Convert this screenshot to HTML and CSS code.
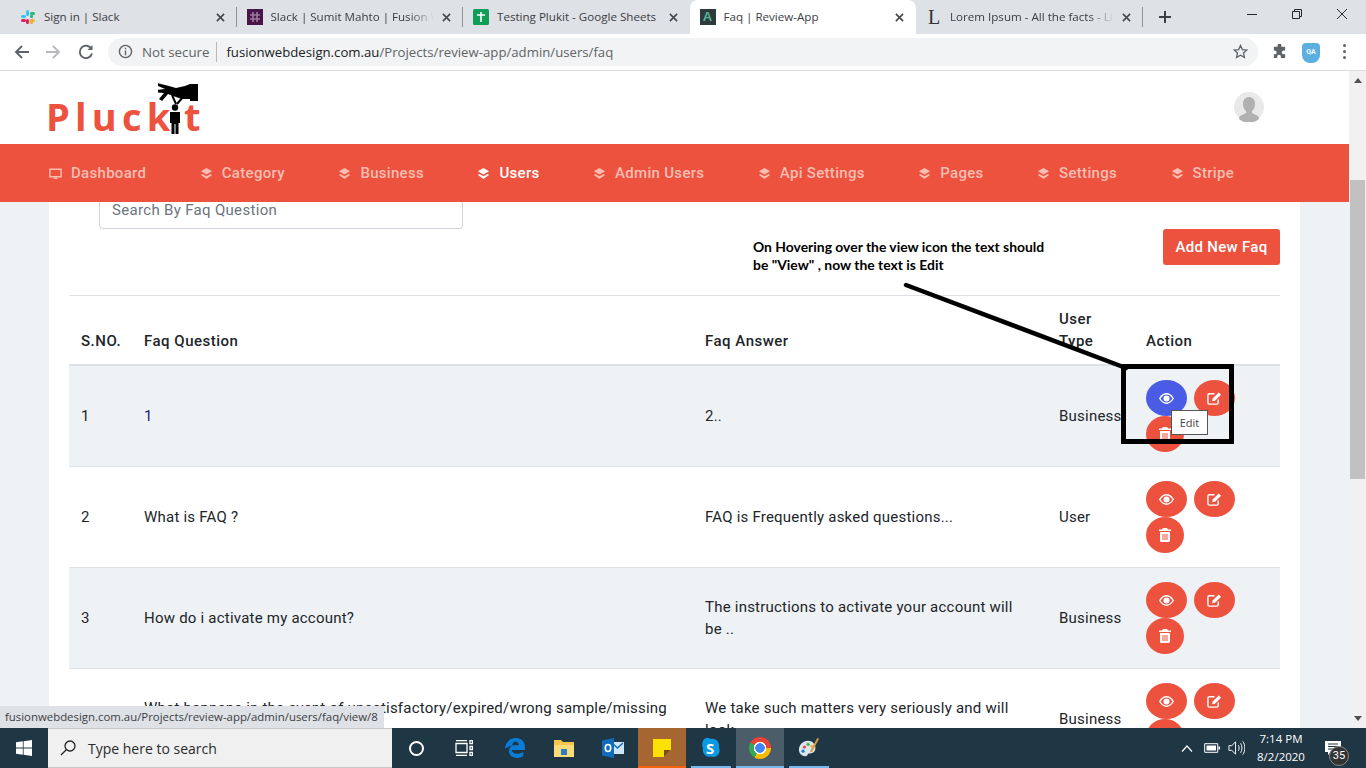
FILE: index.html
```html
<!DOCTYPE html>
<html lang="en">
  <head>
    <meta charset="UTF-8" />
    <title>Faq | Review-App</title>
    <link rel="stylesheet" href="styles.css">
  </head>
  <body>
    <div class="screen">
      <!-- browser tabs -->
      <div class="tabstrip">
        <div class="tab">
          <svg class="favicon" viewBox="0 0 16 16">
            <rect x="6" y="1" width="3" height="6" rx="1.5" fill="#36c5f0"/><rect x="1" y="6" width="5" height="3" rx="1.5" fill="#36c5f0"/>
            <rect x="10" y="3" width="5" height="3" rx="1.5" fill="#2eb67d"/><rect x="10" y="6" width="3" height="3" rx="1" fill="#2eb67d"/>
            <rect x="1" y="10" width="5" height="3" rx="1.5" fill="#e01e5a"/><rect x="6" y="10" width="3" height="5" rx="1.5" fill="#e01e5a"/>
            <rect x="10" y="10" width="3" height="5" rx="1.5" fill="#ecb22e"/><rect x="10" y="10" width="5" height="3" rx="1.5" fill="#ecb22e"/>
          </svg>
          <span class="tab-title">Sign in | Slack</span>
          <svg class="tab-close" viewBox="0 0 10 10"><path d="M1 1l8 8M9 1l-8 8"/></svg>
        </div>
        <div class="tab">
          <svg class="favicon" viewBox="0 0 16 16">
            <rect width="16" height="16" fill="#4a154b"/>
            <path d="M6 3v10M10 3v10M3 6h10M3 10h10" stroke="#9b7a9c" stroke-width="1.6"/>
          </svg>
          <span class="tab-title fade">Slack | Sumit Mahto | Fusion Web Design</span>
          <svg class="tab-close" viewBox="0 0 10 10"><path d="M1 1l8 8M9 1l-8 8"/></svg>
        </div>
        <div class="tab no-sep">
          <svg class="favicon" viewBox="0 0 16 16">
            <rect width="16" height="16" rx="1.5" fill="#0f9d58"/>
            <path d="M8 3v10M4 6h8" stroke="#fff" stroke-width="1.6"/>
          </svg>
          <span class="tab-title">Testing Plukit - Google Sheets</span>
          <svg class="tab-close" viewBox="0 0 10 10"><path d="M1 1l8 8M9 1l-8 8"/></svg>
        </div>
        <div class="tab tab-active">
          <span class="favicon favicon-a">A</span>
          <span class="tab-title">Faq | Review-App</span>
          <svg class="tab-close" viewBox="0 0 10 10"><path d="M1 1l8 8M9 1l-8 8"/></svg>
        </div>
        <div class="tab">
          <span class="favicon favicon-l">L</span>
          <span class="tab-title fade">Lorem Ipsum - All the facts - Lipsum</span>
          <svg class="tab-close" viewBox="0 0 10 10"><path d="M1 1l8 8M9 1l-8 8"/></svg>
        </div>
        <svg class="new-tab" viewBox="0 0 12 12"><path d="M6 0v12M0 6h12"/></svg>
        <div class="win-controls">
          <svg viewBox="0 0 10 10"><path d="M0 5.5h10"/></svg>
          <svg viewBox="0 0 10 10"><path d="M.5 2.5h7v7h-7zM2.5 2.5v-2h7v7h-2"/></svg>
          <svg viewBox="0 0 10 10"><path d="M0 0l10 10M10 0l-10 10"/></svg>
        </div>
      </div>

      <!-- address bar -->
      <div class="toolbar">
        <svg class="tool-icon" viewBox="0 0 16 16"><path d="M15 8H2M8 2L2 8l6 6"/></svg>
        <svg class="tool-icon tool-off" viewBox="0 0 16 16"><path d="M1 8h13M8 2l6 6-6 6"/></svg>
        <svg class="tool-icon tool-reload" viewBox="0 0 16 16"><path d="M13.5 5A6.2 6.2 0 1 0 14 9.500"/><path class="solid" d="M14.500 1v5h-5z"/></svg>
        <div class="omnibox">
          <svg class="info-icon" viewBox="0 0 16 16"><circle cx="8" cy="8" r="6.500"/><path d="M8 7v5M8 4v1.600"/></svg>
          <span class="not-secure">Not secure</span>
          <span class="url"><b>fusionwebdesign.com.au</b>/Projects/review-app/admin/users/faq</span>
          <svg class="star" viewBox="0 0 16 16"><path d="M8 1.500l2 4.400 4.700.5-3.500 3.200 1 4.700L8 11.900l-4.200 2.400 1-4.700L1.300 6.400 6 5.900z"/></svg>
        </div>
        <svg class="puzzle" viewBox="0 0 16 16"><path d="M6 1.500a2 2 0 0 1 4 0V3h4v4h-1.500a2 2 0 0 0 0 4H14v4H9.500v-1.500a2 2 0 0 0-4 0V15H2v-4h1a2 2 0 0 0 0-4H2V3h4z"/></svg>
        <div class="qa-badge">QA</div>
        <div class="dots"><i></i><i></i><i></i></div>
      </div>

      <div class="viewport">
        <div class="page">
          <header class="site-header">
            <div class="logo">
              <span class="logo-word">Pluck</span>
              <svg class="logo-man" viewBox="0 0 12 30"><circle cx="6" cy="3.500" r="3.200"/><path d="M1 8h10v11H9.500v11H6.500V20h-1v10h-3V19H1z"/></svg>
              <span>t</span>
              <svg class="logo-hand" viewBox="0 0 40 24">
                <path d="M32 1h8v17h-8v-2l-8 0-9-3-5-2-6 7-3-2 5-6-10-1V7l11-1-9-4 1-2 12 3 7 2 9-2z"/>
                <path class="logo-pinch" d="M14 12l4 9M25 14l-6 7"/>
              </svg>
            </div>
            <svg class="avatar" viewBox="0 0 30 30">
              <circle cx="15" cy="15" r="15" fill="#e9e9e9"/>
              <path d="M15 5c4 0 6 3 6 7 0 3-1 5-3 7v2l6 3c1 1 1 3 1 3a15 15 0 0 1-20 0s0-2 1-3l6-3v-2c-2-2-3-4-3-7 0-4 2-7 6-7z" fill="#b1b1b1"/>
            </svg>
          </header>

          <nav class="main-nav">
            <a class="nav-link">
              <svg class="nav-icon" viewBox="0 0 14 14"><path d="M1 2.500h12v8H1z" fill="none" stroke="currentColor" stroke-width="1.600"/><path d="M4.500 13L7 10l2.500 3z"/></svg>Dashboard
            </a>
            <a class="nav-link"><svg class="nav-icon" viewBox="0 0 14 14"><path d="M7 1l6 3.500L7 8 1 4.500zM2.500 7.500L7 10l4.500-2.500L13 8.500 7 13 1 8.500z"/></svg>Category</a>
            <a class="nav-link"><svg class="nav-icon" viewBox="0 0 14 14"><path d="M7 1l6 3.500L7 8 1 4.500zM2.500 7.500L7 10l4.500-2.500L13 8.500 7 13 1 8.500z"/></svg>Business</a>
            <a class="nav-link nav-active"><svg class="nav-icon" viewBox="0 0 14 14"><path d="M7 1l6 3.500L7 8 1 4.500zM2.500 7.500L7 10l4.500-2.500L13 8.500 7 13 1 8.500z"/></svg>Users</a>
            <a class="nav-link"><svg class="nav-icon" viewBox="0 0 14 14"><path d="M7 1l6 3.500L7 8 1 4.500zM2.500 7.500L7 10l4.500-2.500L13 8.500 7 13 1 8.500z"/></svg>Admin Users</a>
            <a class="nav-link"><svg class="nav-icon" viewBox="0 0 14 14"><path d="M7 1l6 3.500L7 8 1 4.500zM2.500 7.500L7 10l4.500-2.500L13 8.500 7 13 1 8.500z"/></svg>Api Settings</a>
            <a class="nav-link"><svg class="nav-icon" viewBox="0 0 14 14"><path d="M7 1l6 3.500L7 8 1 4.500zM2.500 7.500L7 10l4.500-2.500L13 8.500 7 13 1 8.500z"/></svg>Pages</a>
            <a class="nav-link"><svg class="nav-icon" viewBox="0 0 14 14"><path d="M7 1l6 3.500L7 8 1 4.500zM2.500 7.500L7 10l4.500-2.500L13 8.500 7 13 1 8.500z"/></svg>Settings</a>
            <a class="nav-link"><svg class="nav-icon" viewBox="0 0 14 14"><path d="M7 1l6 3.500L7 8 1 4.500zM2.500 7.500L7 10l4.500-2.500L13 8.500 7 13 1 8.500z"/></svg>Stripe</a>
          </nav>

          <main class="content">
            <div class="card">
              <div class="search-box">Search By Faq Question</div>
              <div class="card-actions"><a class="add-btn">Add New Faq</a></div>
              <table class="faq-table">
                <colgroup>
                  <col class="c-no"><col class="c-q"><col class="c-a"><col class="c-type"><col class="c-act">
                </colgroup>
                <thead>
                  <tr><th>S.NO.</th><th>Faq Question</th><th>Faq Answer</th><th>User Type</th><th>Action</th></tr>
                </thead>
                <tbody>
                  <tr>
                    <td>1</td><td class="q-link">1</td><td class="answer">2..</td><td>Business</td>
                    <td>
                      <div class="actions">
                        <a class="round round-wide hover"><svg viewBox="0 0 16 12"><path class="ln" d="M.8 6C3 2.500 5.500 1 8 1s5 1.500 7.200 5C13 9.500 10.500 11 8 11S3 9.500.8 6z"/><circle cx="8" cy="6" r="3.200"/></svg></a>
                        <a class="round round-wide"><svg viewBox="0 0 16 14"><path class="ln" d="M12 8v3.500a1.500 1.500 0 0 1-1.500 1.500h-8A1.500 1.500 0 0 1 1 11.500v-8A1.500 1.500 0 0 1 2.500 2H8"/><path d="M6 7l6.500-6.500 2.500 2.500L8.500 9.500 5.500 10z"/></svg></a>
                        <a class="round"><svg class="trash" viewBox="0 0 12 14"><path d="M4 0h4l1 1.500h3V3H0V1.500h3zM1 4h10v8.500A1.500 1.500 0 0 1 9.500 14h-7A1.500 1.500 0 0 1 1 12.500zM3.500 6v6h1V6zm2 0v6h1V6zm2 0v6h1V6z" fill-rule="evenodd"/></svg></a>
                      </div>
                    </td>
                  </tr>
                  <tr>
                    <td>2</td><td>What is FAQ ?</td><td class="answer">FAQ is Frequently asked questions...</td><td>User</td>
                    <td>
                      <div class="actions">
                        <a class="round round-wide"><svg viewBox="0 0 16 12"><path class="ln" d="M.8 6C3 2.500 5.500 1 8 1s5 1.500 7.200 5C13 9.500 10.500 11 8 11S3 9.500.8 6z"/><circle cx="8" cy="6" r="3.200"/></svg></a>
                        <a class="round round-wide"><svg viewBox="0 0 16 14"><path class="ln" d="M12 8v3.500a1.500 1.500 0 0 1-1.500 1.500h-8A1.500 1.500 0 0 1 1 11.500v-8A1.500 1.500 0 0 1 2.500 2H8"/><path d="M6 7l6.500-6.500 2.500 2.500L8.500 9.500 5.500 10z"/></svg></a>
                        <a class="round"><svg class="trash" viewBox="0 0 12 14"><path d="M4 0h4l1 1.500h3V3H0V1.500h3zM1 4h10v8.500A1.500 1.500 0 0 1 9.500 14h-7A1.500 1.500 0 0 1 1 12.500zM3.500 6v6h1V6zm2 0v6h1V6zm2 0v6h1V6z" fill-rule="evenodd"/></svg></a>
                      </div>
                    </td>
                  </tr>
                  <tr>
                    <td>3</td><td>How do i activate my account?</td><td class="answer">The instructions to activate your account will be ..</td><td>Business</td>
                    <td>
                      <div class="actions">
                        <a class="round round-wide"><svg viewBox="0 0 16 12"><path class="ln" d="M.8 6C3 2.500 5.500 1 8 1s5 1.500 7.200 5C13 9.500 10.500 11 8 11S3 9.500.8 6z"/><circle cx="8" cy="6" r="3.200"/></svg></a>
                        <a class="round round-wide"><svg viewBox="0 0 16 14"><path class="ln" d="M12 8v3.500a1.500 1.500 0 0 1-1.500 1.500h-8A1.500 1.500 0 0 1 1 11.500v-8A1.500 1.500 0 0 1 2.500 2H8"/><path d="M6 7l6.500-6.500 2.500 2.500L8.500 9.500 5.500 10z"/></svg></a>
                        <a class="round"><svg class="trash" viewBox="0 0 12 14"><path d="M4 0h4l1 1.500h3V3H0V1.500h3zM1 4h10v8.500A1.500 1.500 0 0 1 9.500 14h-7A1.500 1.500 0 0 1 1 12.500zM3.500 6v6h1V6zm2 0v6h1V6zm2 0v6h1V6z" fill-rule="evenodd"/></svg></a>
                      </div>
                    </td>
                  </tr>
                  <tr>
                    <td>4</td><td>What happens in the event of unsatisfactory/expired/wrong sample/missing kit..</td><td class="answer">We take such matters very seriously and will look..</td><td>Business</td>
                    <td>
                      <div class="actions">
                        <a class="round round-wide"><svg viewBox="0 0 16 12"><path class="ln" d="M.8 6C3 2.500 5.500 1 8 1s5 1.500 7.200 5C13 9.500 10.500 11 8 11S3 9.500.8 6z"/><circle cx="8" cy="6" r="3.200"/></svg></a>
                        <a class="round round-wide"><svg viewBox="0 0 16 14"><path class="ln" d="M12 8v3.500a1.500 1.500 0 0 1-1.500 1.500h-8A1.500 1.500 0 0 1 1 11.500v-8A1.500 1.500 0 0 1 2.500 2H8"/><path d="M6 7l6.500-6.500 2.500 2.500L8.500 9.500 5.500 10z"/></svg></a>
                        <a class="round"></a>
                      </div>
                    </td>
                  </tr>
                </tbody>
              </table>
            </div>
          </main>
        </div>

        <div class="scrollbar">
          <div class="arrow-up"></div>
          <div class="thumb"></div>
          <div class="arrow-down"></div>
        </div>
      </div>

      <!-- windows taskbar -->
      <div class="taskbar">
        <div class="start">
          <svg viewBox="0 0 16 16"><path d="M0 2.300l6.800-1v6.300H0zM7.600 1.200L16 0v7.600H7.600zM0 8.400h6.800v6.300l-6.800-1zM7.600 8.400H16V16l-8.400-1.200z"/></svg>
        </div>
        <div class="task-search">
          <svg viewBox="0 0 16 16"><circle cx="10" cy="6" r="5"/><path d="M6.500 9.500L1 15"/></svg>
          <span>Type here to search</span>
        </div>
        <div class="task-slot"><i class="cortana"></i></div>
        <div class="task-slot">
          <svg class="w18" viewBox="0 0 18 16" fill="none" stroke="#fff" stroke-width="1.300"><path d="M1 3.500h11v9H1zM1 .7h11M1 15.300h11M15 .7h2.500v3H15zM15 6.500h2.500v3H15zM15 12.300h2.500v3H15z"/></svg>
        </div>
        <div class="task-slot push">
          <svg class="w22" viewBox="0 0 20 20"><path d="M1 11C1 5 5 1 11 1c5 0 8 3.500 8 8.500v2.300H7c.3 3.500 5.500 4.700 10.500 1.800v4C15.700 18.600 13.700 19 12 19c-5 0-7.500-3-7.500-6 0-2.500 1.300-4.300 3.500-5.500C5 8 2.500 9.500 1 11zm6.300-3.500h6.200C13.300 5 12 4 10.500 4 9 4 7.700 5.300 7.300 7.500z" fill="#0a7cd6" fill-rule="evenodd"/></svg>
        </div>
        <div class="task-slot gap">
          <svg class="w22" viewBox="0 0 22 20"><path d="M1 2h7l2 2h11v15H1z" fill="#f4c64f"/><path d="M1 7h20v12H1z" fill="#fbdc7a"/><path d="M8 11h6v6H8z" fill="#2a7fc4"/></svg>
        </div>
        <div class="task-slot gap">
          <svg class="w22" viewBox="0 0 22 20"><path d="M9 4h13v12H9z" fill="#cfe6f7"/><path d="M10 5l5.500 5L21 5" fill="none" stroke="#0f6cbd" stroke-width="1.500"/><path d="M0 2.500L12 0v20L0 17.500z" fill="#0f6cbd"/><ellipse cx="6" cy="10" rx="2.700" ry="3.500" fill="none" stroke="#fff" stroke-width="1.600"/></svg>
        </div>
        <div class="task-slot gap slot-open slot-sticky">
          <svg class="w18" viewBox="0 0 18 18"><path d="M0 0h18v11l-7 7H0z" fill="#fde100"/><path d="M11 18v-7h7z" fill="#7b4a1d"/></svg>
        </div>
        <div class="task-slot gap slot-run">
          <svg class="w22" viewBox="0 0 20 22"><path d="M6 1a5 5 0 0 1 4 1c5-1 9 3 8 9 2 4-1 9-6 9-1 0-2-.2-2.500-.5C5 20.500 1 17 2 11 0 7 2 1 6 1z" fill="#0a9ae3"/></svg>
          <span class="skype-s">S</span>
        </div>
        <div class="task-slot gap slot-run slot-chrome"><i class="chrome"></i></div>
        <div class="task-slot gap slot-run">
          <svg class="w22" viewBox="0 0 24 24"><path d="M11 4C5 4 1 9 1 14c0 4 3 7 7 7 3 0 2-3 4-3 3 0 7-1 7-6 0-5-4-8-8-8z" fill="#dbe6ee"/><circle cx="7" cy="11" r="1.800" fill="#d9534f"/><circle cx="11" cy="8" r="1.800" fill="#4caf50"/><circle cx="5.500" cy="15.500" r="1.800" fill="#2a7fc4"/><circle cx="15" cy="10" r="1.600" fill="#f0ad4e"/><path d="M21 1l2 1-8 15-2-1z" fill="#d99a3e"/></svg>
        </div>
        <div class="tray">
          <svg class="tray-caret" viewBox="0 0 12 7"><path d="M1 6.500L6 1l5 5.500"/></svg>
          <svg class="tray-batt" viewBox="0 0 16 10"><path class="ln" d="M.7.700h13v8.600H.7z"/><path d="M2.500 2.500h9.500v5H2.500zM14.500 3.500H16v3h-1.500z"/></svg>
          <svg class="tray-vol" viewBox="0 0 18 16"><path d="M1 5.500h3L8 1.500v13l-4-4H1zM11 5c1 2 1 4 0 6M13.300 3c2 3 2 7 0 10M15.600 1c3 4 3 10 0 14"/></svg>
          <div class="clock"><div>7:14 PM</div><div>8/2/2020</div></div>
          <div class="notif">
            <svg viewBox="0 0 16 14"><path d="M0 0h16v11H6l-3 3v-3H0z"/><path class="bars" d="M3 3h10M3 5.500h10M3 8h10"/></svg>
            <span class="notif-count">35</span>
          </div>
        </div>
      </div>

      <!-- things that lie over the page -->
      <div class="status-bubble">fusionwebdesign.com.au/Projects/review-app/admin/users/faq/view/8</div>
      <div class="note">On Hovering over the view icon the text should<br>be "View" , now the text is Edit</div>
      <svg class="note-arrow" viewBox="0 0 240 100"><path d="M5 5L225 88"/></svg>
      <div class="note-box"></div>
      <div class="tip">Edit</div>
    </div>
  </body>
</html>
```

FILE: styles.css
```css
* {
  margin: 0;
  padding: 0;
  box-sizing: border-box;
}

body {
  width: 1366px;
  height: 768px;
  overflow: hidden;
  background: #fff;
  font-family: Roboto, "Liberation Sans", sans-serif;
}

.screen {
  position: relative;
  display: flex;
  flex-direction: column;
  width: 1366px;
  height: 768px;
  overflow: hidden;
}

/* tabs */
.tabstrip {
  display: flex;
  align-items: center;
  flex: none;
  height: 34px;
  padding-left: 10px;
  background: #dee1e6;
  font-family: "Open Sans", sans-serif;
}
.tab {
  position: relative;
  display: flex;
  align-items: center;
  width: 226.5px;
  height: 34px;
  padding: 0 9px 0 10px;
  color: #3c4043;
  font-size: 11.6px;
}
.tab::after {
  content: "";
  position: absolute;
  right: 0;
  top: 7px;
  width: 1px;
  height: 20px;
  background: #8f9499;
}
.tab.no-sep::after {
  display: none;
}
.tab-active {
  background: #fff;
  border-radius: 8px 8px 0 0;
}
.tab-active::after {
  display: none;
}
.favicon {
  flex: none;
  width: 16px;
  height: 16px;
  margin-right: 8px;
}
.favicon-a {
  background: #2f3a3a;
  color: #4fb89b;
  font: bold 13px/16px "Liberation Sans", sans-serif;
  text-align: center;
}
.favicon-l {
  color: #333;
  font: 20px/16px "Liberation Serif", serif;
  text-align: center;
}
.tab-title {
  flex: 1;
  padding-bottom: 2px;
  overflow: hidden;
  white-space: nowrap;
}
.tab-title.fade {
  -webkit-mask-image: linear-gradient(to right, #000 85%, transparent);
  mask-image: linear-gradient(to right, #000 85%, transparent);
}
.tab-close {
  flex: none;
  width: 9px;
  height: 9px;
  margin-left: 8px;
  margin-right: 3px;
  fill: none;
  stroke: #45494d;
  stroke-width: 1.8;
}
.new-tab {
  width: 12px;
  height: 12px;
  margin-left: 16px;
  fill: none;
  stroke: #3c4043;
  stroke-width: 2;
}
.win-controls {
  display: flex;
  gap: 35px;
  margin-left: auto;
  margin-right: 19px;
  margin-top: -6px;
}
.win-controls svg {
  width: 10px;
  height: 10px;
  fill: none;
  stroke: #26282b;
  stroke-width: 1;
}

/* address bar */
.toolbar {
  display: flex;
  align-items: center;
  flex: none;
  height: 37px;
  padding: 0 0 1px 14px;
  background: #fff;
  border-bottom: 1px solid #dadce0;
}
.tool-icon {
  width: 16px;
  height: 16px;
  margin-right: 15px;
  fill: none;
  stroke: #5f6368;
  stroke-width: 1.9;
}
.tool-off {
  stroke: #b8babd;
}
.tool-reload {
  margin-left: 2px;
  margin-right: 14px;
}
.tool-reload .solid {
  fill: #5f6368;
  stroke: none;
}
.omnibox {
  display: flex;
  align-items: center;
  width: 1150px;
  height: 28px;
  padding: 0 10px;
  background: #f1f3f4;
  border-radius: 14px;
  font-family: "Open Sans", sans-serif;
  font-size: 13.2px;
}
.info-icon {
  width: 15px;
  height: 15px;
  fill: none;
  stroke: #5f6368;
  stroke-width: 1.500;
}
.not-secure {
  margin-left: 9px;
  padding-right: 7px;
  border-right: 1px solid #b6b8bb;
  color: #5f6368;
  font-size: 13.3px;
  line-height: 20px;
}
.url {
  margin-left: 9px;
  color: #5f6368;
}
.url b {
  color: #202124;
  font-weight: 400;
}
.star {
  width: 15px;
  height: 15px;
  margin-left: auto;
  fill: none;
  stroke: #5f6368;
  stroke-width: 1.400;
}
.puzzle {
  width: 15px;
  height: 15px;
  margin-left: 14px;
  fill: #5f6368;
}
.qa-badge {
  width: 18px;
  height: 20px;
  margin-left: 15px;
  margin-top: 2px;
  background: #5aafe0;
  border-radius: 4px 4px 8px 8px;
  color: #fff;
  font-size: 7px;
  font-weight: 700;
  line-height: 18px;
  text-align: center;
}
.dots {
  display: flex;
  flex-direction: column;
  gap: 3px;
  margin-left: 23px;
}
.dots i {
  width: 3px;
  height: 3px;
  background: #5f6368;
  border-radius: 50%;
}

/* page under the browser chrome */
.viewport {
  display: flex;
  flex: 1;
  min-height: 0;
}
.page {
  display: flex;
  flex-direction: column;
  width: 1349px;
  overflow: hidden;
  background: #eef2f5;
}
.site-header {
  display: flex;
  align-items: center;
  justify-content: space-between;
  flex: none;
  height: 73px;
  padding: 0 85px 0 46px;
  background: #fff;
}
.logo {
  position: relative;
  display: flex;
  align-items: flex-end;
  width: 152px;
  height: 62px;
  margin-top: 2px;
  color: #ed523f;
  font-family: "Open Sans", sans-serif;
  font-size: 38px;
  font-weight: 700;
  line-height: 48px;
}
.logo-word {
  width: 121px;
  letter-spacing: 5.2px;
}
.logo-man {
  flex: none;
  width: 12px;
  height: 30px;
  margin: 0 3px 6px 2px;
  fill: #000;
}
.logo-hand {
  position: absolute;
  right: 0;
  top: 5px;
  width: 40px;
  height: 24px;
  fill: #000;
}
.logo-pinch {
  fill: none;
  stroke: #000;
  stroke-width: 2;
}
.avatar {
  width: 30px;
  height: 30px;
  margin-top: -2px;
}
.main-nav {
  display: flex;
  flex: none;
  gap: 53.5px;
  align-items: center;
  height: 58px;
  padding-left: 49px;
  background: #ed523f;
  position: relative;
  z-index: 1;
}
.nav-link {
  display: flex;
  align-items: center;
  gap: 9px;
  color: #fabdb2;
  fill: #fabdb2;
  font-size: 15px;
  font-weight: 500;
  letter-spacing: .3px;
}
.nav-active {
  color: #fff;
  fill: #fff;
}
.nav-icon {
  width: 13px;
  height: 13px;
}

/* faq card */
.content {
  flex: 1;
  min-height: 0;
  padding: 0 49px;
}
.card {
  margin-top: -11px;
  height: 600px;
  padding: 0 20px;
  background: #fff;
  color: #212529;
  font-size: 15px;
  letter-spacing: .22px;
}
.search-box {
  width: 364px;
  height: 38px;
  margin-left: 30px;
  padding: 8px 12px 0;
  border: 1px solid #ced4da;
  border-radius: 4px;
  color: #6c757d;
  letter-spacing: .32px;
  line-height: 20px;
}
.card-actions {
  display: flex;
  justify-content: flex-end;
  height: 66px;
}
.add-btn {
  width: 117px;
  height: 36px;
  background: #ed523f;
  border-radius: 3px;
  color: #fff;
  font-weight: 500;
  letter-spacing: .3px;
  line-height: 36px;
  text-align: center;
}
.faq-table {
  width: 1211px;
  table-layout: fixed;
  border-collapse: collapse;
  border-top: 1px solid #dee2e6;
}
.c-no { width: 63px; }
.c-q { width: 561px; }
.c-a { width: 354px; }
.c-type { width: 87px; }
.c-act { width: 146px; }
.faq-table th {
  padding: 12px 12px 12px;
  border-bottom: 2px solid #dee2e6;
  font-weight: 500;
  letter-spacing: .5px;
  line-height: 22px;
  text-align: left;
  vertical-align: bottom;
}
.faq-table td {
  padding: 14px 12px;
  border-bottom: 1px solid #dee2e6;
  line-height: 22px;
  vertical-align: middle;
}
.faq-table td.answer {
  padding-right: 24px;
}
.faq-table tbody tr:nth-child(odd) {
  background: #eef2f5;
}
.q-link {
  color: #1a237e;
}
.actions {
  display: flex;
  flex-wrap: wrap;
  column-gap: 7px;
  width: 100px;
}
.round {
  display: flex;
  align-items: center;
  justify-content: center;
  width: 38px;
  height: 36px;
  background: #ed523f;
  border-radius: 50%;
}
.round-wide {
  width: 41px;
}
.round svg {
  width: 15px;
  height: 15px;
  fill: #fff;
}
.round svg.trash {
  width: 12px;
  height: 14px;
}
.round .ln {
  fill: none;
  stroke: #fff;
  stroke-width: 1.500;
}
.hover {
  background: #4a5ce6;
}

.scrollbar {
  display: flex;
  flex-direction: column;
  align-items: center;
  width: 17px;
  background: #f1f1f1;
}
.arrow-up {
  width: 0;
  height: 0;
  margin-top: 7px;
  border: 4px solid transparent;
  border-top: 0;
  border-bottom: 5px solid #505050;
}
.thumb {
  flex: none;
  width: 15px;
  height: 299px;
  margin-top: 97px;
  background: #c1c1c1;
}
.arrow-down {
  width: 0;
  height: 0;
  margin-top: auto;
  margin-bottom: 7px;
  border: 4px solid transparent;
  border-bottom: 0;
  border-top: 5px solid #505050;
}

/* taskbar */
.taskbar {
  position: relative;
  z-index: 2;
  display: flex;
  flex: none;
  height: 40px;
  background: #1f3644;
  color: #fff;
}
.start {
  display: flex;
  align-items: center;
  justify-content: center;
  width: 48px;
}
.start svg {
  width: 16px;
  height: 16px;
  fill: #fff;
}
.task-search {
  display: flex;
  align-items: center;
  gap: 12px;
  width: 344px;
  padding-left: 12px;
  background: #f0f0f0;
  border: 1px solid #c9c9c9;
  border-width: 1px 0;
  color: #2b2b2b;
  font-family: "Open Sans", sans-serif;
  font-size: 14px;
}
.task-search svg {
  width: 16px;
  height: 16px;
  fill: none;
  stroke: #222;
  stroke-width: 1.300;
}
.task-slot {
  position: relative;
  display: flex;
  align-items: center;
  justify-content: center;
  flex: none;
  width: 48px;
}
.push {
  margin-left: 3px;
}
.gap {
  margin-left: 1px;
}
.w18 {
  width: 18px;
  height: 18px;
}
.w22 {
  width: 22px;
  height: 22px;
}
.cortana {
  width: 15px;
  height: 15px;
  border: 2.500px solid #fff;
  border-radius: 50%;
}
.slot-open::after,
.slot-run::after {
  content: "";
  position: absolute;
  left: 4px;
  right: 4px;
  bottom: 0;
  height: 2px;
  background: #76b9ed;
}
.slot-sticky {
  background: #a56632;
}
.slot-sticky::after {
  left: 0;
  right: 0;
  background: #f7630c;
}
.slot-chrome {
  background: #4b5d68;
}
.slot-chrome::after {
  left: 0;
  right: 0;
}
.skype-s {
  position: absolute;
  left: 19px;
  top: 10px;
  color: #fff;
  font: bold 15px/20px "Open Sans", sans-serif;
}
.chrome {
  width: 22px;
  height: 22px;
  border-radius: 50%;
  background:
    radial-gradient(circle, #4285f4 0 4.500px, #fff 5px 6px, transparent 6.500px),
    conic-gradient(#ea4335 0 90deg, #fbbc05 90deg 210deg, #34a853 210deg 300deg, #ea4335 300deg);
}
.tray {
  display: flex;
  align-items: center;
  margin-left: auto;
}
.tray-caret {
  width: 12px;
  height: 7px;
  margin-right: 11px;
  fill: none;
  stroke: #fff;
  stroke-width: 1.200;
}
.tray-batt {
  width: 16px;
  height: 10px;
  margin-right: 8px;
  fill: #fff;
}
.tray-batt .ln {
  fill: none;
  stroke: #fff;
}
.tray-vol {
  width: 17px;
  height: 16px;
  fill: none;
  stroke: #fff;
}
.clock {
  width: 74px;
  margin-left: -1px;
  font-family: "Open Sans", sans-serif;
  font-size: 11.5px;
  line-height: 18px;
  text-align: center;
}
.notif {
  position: relative;
  width: 17px;
  height: 15px;
  margin: -2px 24px 0 7px;
}
.notif svg {
  width: 16px;
  height: 14px;
  fill: #fff;
}
.notif .bars {
  fill: none;
  stroke: #1f3644;
}
.notif-count {
  position: absolute;
  left: 4px;
  top: 6px;
  width: 20px;
  height: 20px;
  background: #333;
  border: 1px solid #888;
  border-radius: 50%;
  font-size: 11px;
  line-height: 18px;
  text-align: center;
}

/* overlays */
.status-bubble {
  position: absolute;
  left: 0;
  top: 706px;
  width: 384px;
  height: 22px;
  padding-left: 5px;
  background: #dee1e6;
  color: #3c4043;
  font-family: "Open Sans", sans-serif;
  font-size: 11.4px;
  line-height: 22px;
  white-space: nowrap;
}
.note {
  position: absolute;
  left: 753px;
  top: 238px;
  color: #000;
  font-family: Lato, "Open Sans", sans-serif;
  font-size: 13.9px;
  font-weight: 700;
  line-height: 18px;
  white-space: nowrap;
}
.note-arrow {
  position: absolute;
  left: 901px;
  top: 280px;
  width: 240px;
  height: 100px;
  fill: none;
  stroke: #000;
  stroke-width: 4.500;
  stroke-linecap: round;
}
.note-box {
  position: absolute;
  left: 1121px;
  top: 364px;
  width: 113px;
  height: 80px;
  border: 5px solid #000;
}
.tip {
  position: absolute;
  left: 1171px;
  top: 410px;
  width: 37px;
  height: 25px;
  background: #fff;
  border: 1px solid #555;
  color: #444;
  font-family: "Open Sans", sans-serif;
  font-size: 11px;
  line-height: 24px;
  text-align: center;
}
```
